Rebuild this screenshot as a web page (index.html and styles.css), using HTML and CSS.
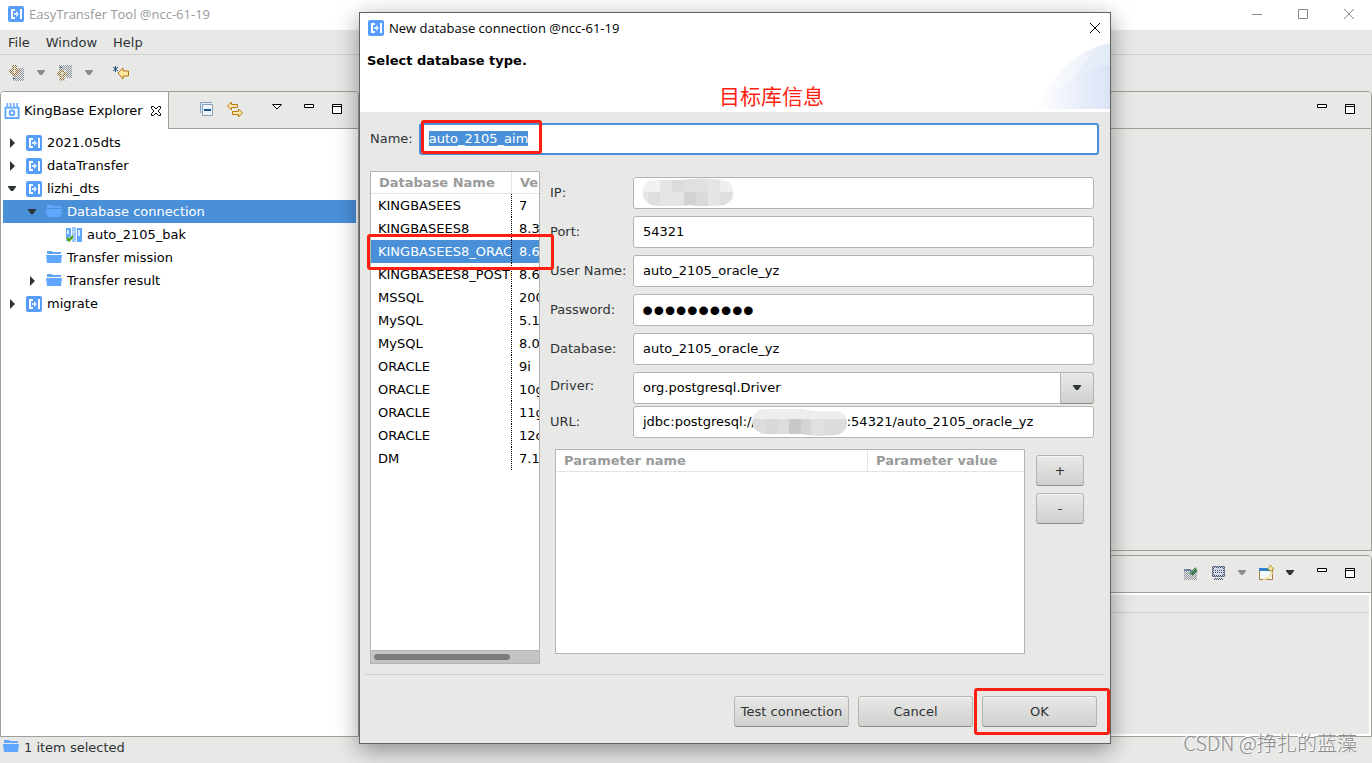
FILE: index.html
```html
<!DOCTYPE html>
<html lang="en">
<head>
<meta charset="utf-8">
<title>EasyTransfer Tool @ncc-61-19</title>
<link rel="stylesheet" href="styles.css">
</head>
<body>
<svg class="defs" aria-hidden="true">
  <defs>
    <pattern id="dots-gray" width="2" height="2" patternUnits="userSpaceOnUse"><path d="M0 0h1v1H0zM1 1h1v1H1z" fill="#8f959f"/></pattern>
    <pattern id="dots-brown" width="2" height="2" patternUnits="userSpaceOnUse"><path d="M0 0h1v1H0zM1 1h1v1H1z" fill="#8a6a38"/></pattern>
    <pattern id="dots-navy" width="2" height="2" patternUnits="userSpaceOnUse"><path d="M0 0h1v1H0zM1 1h1v1H1z" fill="#3c4d6e"/></pattern>
    <linearGradient id="fade-a" x1="0" x2="1"><stop offset="0" stop-color="#fff"/><stop offset="1" stop-color="#e6ecf9"/></linearGradient>
    <linearGradient id="fade-b" x1="0" x2="1"><stop offset="0" stop-color="#fff"/><stop offset="1" stop-color="#dae3f6"/></linearGradient>
  </defs>
  <symbol id="app" viewBox="0 0 16 16"><rect width="16" height="16" rx="2" fill="#579efc"/><path d="M3 3h4v2H5v6h2v2H3z" fill="#fff"/><path d="M12 3h2v10h-2z" fill="#fff"/><path d="M6 7h2V5l3 3-3 3V9H6z" fill="#e3efff"/></symbol>
  <symbol id="folder" viewBox="0 0 16 16"><path d="M1 3V1h5l1 1h8v2H1z" fill="#60a6fb"/><path d="M0 5h16l-1 8H1z" fill="#62a7ff"/></symbol>
  <symbol id="right" viewBox="0 0 8 10"><path d="M2 0l5 5-5 5z" fill="#2e3436"/></symbol>
  <symbol id="down" viewBox="0 0 10 6"><path d="M1 0h8v1L6 5H4L1 1z" fill="currentColor"/></symbol>
  <symbol id="min" viewBox="0 0 16 16"><path d="M3.500 3.500h9v3h-9z" fill="#fff" stroke="#000"/></symbol>
  <symbol id="max" viewBox="0 0 16 16"><path d="M3.500 3.500h9v9h-9zM3 5.500h10" fill="#fff" stroke="#000"/></symbol>
</svg>

<header class="titlebar">
  <svg class="icon"><use href="#app"/></svg>
  <h1 class="title">EasyTransfer Tool @ncc-61-19</h1>
  <div class="window-controls">
    <button type="button" aria-label="Minimize"><svg class="icon" viewBox="0 0 16 16"><path d="M3 8.500h10" stroke="#888"/></svg></button>
    <button type="button" aria-label="Maximize"><svg class="icon" viewBox="0 0 16 16"><path d="M3.500 3.500h9v9h-9z" fill="none" stroke="#888"/></svg></button>
    <button type="button" aria-label="Close"><svg class="icon" viewBox="0 0 16 16"><path d="M3 3l10 10M13 3L3 13" stroke="#888"/></svg></button>
  </div>
</header>
<nav class="menubar">
  <button type="button">File</button><button type="button">Window</button><button type="button">Help</button>
</nav>
<div class="toolbar">
  <button type="button" aria-label="Import"><svg class="icon" viewBox="0 0 16 16"><path d="M7 3h8v13H4v-4h3z" fill="url(#dots-gray)"/><path d="M4 .500h3v5h3L5.500 10.500 1 6V5.500h3z" fill="#efe6cf" stroke="url(#dots-brown)" stroke-width="2"/><path d="M4 13h2v1H4z" fill="#345a8a"/></svg></button>
  <button type="button" aria-label="Import options"><svg class="caret muted"><use href="#down"/></svg></button>
  <button type="button" aria-label="Export"><svg class="icon" viewBox="0 0 16 16"><path d="M2 0h13v13H9V5H2z" fill="url(#dots-gray)"/><path d="M5 5l4.500 4.500h-3v5h-3v-5h-3z" fill="#efe6cf" stroke="url(#dots-brown)" stroke-width="2"/><path d="M3 2h2v1H3z" fill="#345a8a"/></svg></button>
  <button type="button" aria-label="Export options"><svg class="caret muted"><use href="#down"/></svg></button>
  <button type="button" aria-label="Last edit location"><svg class="icon" viewBox="0 0 16 16"><path d="M5 8l5-5v3h5.500v5H10v3z" fill="#ffe9a0" stroke="#b87812"/><path d="M2.500 1v6M0 2l5 4M5 2L0 6" stroke="#1f4f80"/></svg></button>
</div>

<main class="workbench">
  <section class="panel explorer">
    <div class="panel-head">
      <div class="tab">
        <svg class="icon" viewBox="0 0 16 17"><path d="M0 4h16v13H0z" fill="#5fa6fb"/><path d="M3 0v5M6.500 0v5M10 0v5M13.500 0v5" stroke="#78b3fb" stroke-width="2"/><path d="M2 6h12v9H2z" fill="#fff"/><circle cx="8" cy="10.500" r="2.500" fill="#fff" stroke="#5fa6fb" stroke-width="2"/></svg>
        <span>KingBase Explorer</span>
        <button type="button" aria-label="Close tab"><svg class="icon-sm" viewBox="0 0 12 12"><path d="M1.500 1.500h2L6 4l2.500-2.500h2v2L8 6l2.500 2.500v2h-2L6 8l-2.500 2.500h-2v-2L4 6 1.500 3.500z" fill="#fff" stroke="#000"/></svg></button>
      </div>
      <div class="tools">
        <button type="button" aria-label="Collapse all"><svg class="icon" viewBox="0 0 16 16"><path d="M1.500 12V1.500H13" fill="none" stroke="#7fa2c4"/><path d="M3.500 3.500h10v11h-10z" fill="#eef5fc" stroke="#86a0ba"/><path d="M5 9h7" stroke="#16568f" stroke-width="2"/></svg></button>
        <button type="button" class="after-sm" aria-label="Link with editor"><svg class="icon" viewBox="0 0 16 16"><path d="M.500 5l4-4v2.500h6v3h-6V9zM15.500 12l-4-4v2.500h-6v3h6V16z" fill="#ffe9a8" stroke="#b87812"/></svg></button>
        <button type="button" class="after-lg" aria-label="View menu"><svg class="icon" viewBox="0 0 16 16"><path d="M3.500 3.500h9L8 8z" fill="#fff" stroke="#000"/></svg></button>
        <button type="button" class="after-md" aria-label="Minimize view"><svg class="icon"><use href="#min"/></svg></button>
        <button type="button" class="after-sm" aria-label="Maximize view"><svg class="icon"><use href="#max"/></svg></button>
      </div>
    </div>
    <ul class="tree">
      <li class="node"><svg class="twisty"><use href="#right"/></svg><svg class="icon"><use href="#app"/></svg><span>2021.05dts</span></li>
      <li class="node"><svg class="twisty"><use href="#right"/></svg><svg class="icon"><use href="#app"/></svg><span>dataTransfer</span></li>
      <li class="node"><svg class="caret"><use href="#down"/></svg><svg class="icon"><use href="#app"/></svg><span>lizhi_dts</span></li>
      <li class="node level-1 selected"><svg class="caret"><use href="#down"/></svg><svg class="icon"><use href="#folder"/></svg><span>Database connection</span></li>
      <li class="node level-2"><span class="twisty"></span><svg class="icon" viewBox="0 0 16 16"><path d="M0 1h5v13H0z" fill="#62a7ff"/><path d="M6 0h4v15H6z" fill="#9cc8ff"/><path d="M11 1h5v14h-5z" fill="#62a7ff"/><path d="M7 4h2v2H7zM12 3h2v6h-2zM1 3h2v4H1z" fill="#d5e8ff"/><path d="M1 11l2 2 4-4" fill="none" stroke="#e6f3dc" stroke-width="3"/><path d="M1 10.500l2 3 4-4.500" fill="none" stroke="#3f9d10" stroke-width="2"/></svg><span>auto_2105_bak</span></li>
      <li class="node level-1"><span class="twisty"></span><svg class="icon"><use href="#folder"/></svg><span>Transfer mission</span></li>
      <li class="node level-1"><svg class="twisty"><use href="#right"/></svg><svg class="icon"><use href="#folder"/></svg><span>Transfer result</span></li>
      <li class="node"><svg class="twisty"><use href="#right"/></svg><svg class="icon"><use href="#app"/></svg><span>migrate</span></li>
    </ul>
  </section>
  <div class="right-side">
    <section class="panel editor">
      <div class="panel-head"><div class="tools">
        <button type="button" aria-label="Minimize editor"><svg class="icon"><use href="#min"/></svg></button>
        <button type="button" class="after-sm" aria-label="Maximize editor"><svg class="icon"><use href="#max"/></svg></button>
      </div></div>
    </section>
    <section class="panel console">
      <div class="panel-head"><div class="tools">
        <button type="button" aria-label="Pin console"><svg class="icon" viewBox="0 0 16 16"><path d="M2 5h9v2h4v8H2z" fill="url(#dots-gray)"/><path d="M2 4h7v2H2z" fill="#71849b"/><path d="M8 9l6-6M10 10l5-5" stroke="#3e7a52" stroke-width="2"/><path d="M8 9l6-6" stroke="#9cc0a6" stroke-dasharray="1 1"/></svg></button>
        <button type="button" class="after-sm" aria-label="Display console"><svg class="icon" viewBox="0 0 16 16"><path d="M3 2h11v9H3z" fill="#d4dae4"/><path d="M2 1h13v2H2zM2 3h2v9H2zM13 3h2v9h-2zM2 10h13v2H2zM4 13h9v2H4zM5 5h7v1H5zM5 7h7v1H5z" fill="url(#dots-navy)"/><path d="M2.500 1.500h12v10h-12z" fill="none" stroke="#4d5c7a" stroke-opacity=".5"/></svg></button>
        <button type="button" class="after-xs" aria-label="Console list"><svg class="caret muted"><use href="#down"/></svg></button>
        <button type="button" class="after-xs" aria-label="Open console"><svg class="icon" viewBox="0 0 16 16"><path d="M1.500 3.500h13v11h-13z" fill="#f2f9ff" stroke="#a3803c"/><path d="M1 3h11v3H1z" fill="#3183c8"/><path d="M5 14c5 0 8-3 9-7" fill="none" stroke="#f5e7ae" stroke-width="2"/><path d="M12.500 0l1.500 2.500 2 1-2 1-1.500 2.500-1-2.500-2-1 2-1z" fill="#ffeeb0" stroke="#c39a3a"/></svg></button>
        <button type="button" class="after-xs" aria-label="New console"><svg class="caret"><use href="#down"/></svg></button>
        <button type="button" class="after-md" aria-label="Minimize console"><svg class="icon"><use href="#min"/></svg></button>
        <button type="button" class="after-sm" aria-label="Maximize console"><svg class="icon"><use href="#max"/></svg></button>
      </div></div>
      <div class="console-body"><div class="console-label"></div></div>
    </section>
  </div>
</main>
<footer class="statusbar"><svg class="icon"><use href="#folder"/></svg><span>1 item selected</span></footer>

<div class="dialog" role="dialog" aria-labelledby="dialog-title">
  <div class="dialog-title">
    <svg class="icon"><use href="#app"/></svg>
    <h2 class="title" id="dialog-title">New database connection @ncc-61-19</h2>
    <button type="button" aria-label="Close dialog"><svg class="icon" viewBox="0 0 16 16"><path d="M3 3l10 10M13 3L3 13" stroke="#000"/></svg></button>
  </div>
  <div class="banner">
    <p class="banner-text">Select database type.</p>
    <p class="note">目标库信息</p>
    <svg class="banner-art" viewBox="0 0 75 66"><path d="M0 66C16 34 42 6 75 0v66z" fill="url(#fade-a)"/><path d="M27 66C37 34 52 8 75 0v66z" fill="#e2eaf8" opacity=".5"/><path d="M0 66C24 42 48 26 75 22v44z" fill="url(#fade-b)"/></svg>
  </div>
  <form class="dialog-body">
    <div class="name-row">
      <label for="name">Name:</label>
      <div class="name-field"><input class="field active" id="name" value="auto_2105_aim" autofocus><span class="mark mark-name"></span></div>
    </div>
    <div class="columns">
      <div class="db-box">
        <div class="db-scroll">
          <table class="db-table">
            <colgroup><col class="db-name"><col class="db-version"></colgroup>
            <thead><tr><th>Database Name</th><th>Version</th></tr></thead>
            <tbody>
              <tr><td>KINGBASEES</td><td>7</td></tr>
              <tr><td>KINGBASEES8</td><td>8.3</td></tr>
              <tr class="selected"><td>KINGBASEES8_ORACLE</td><td>8.6</td></tr>
              <tr><td>KINGBASEES8_POSTGRES</td><td>8.6</td></tr>
              <tr><td>MSSQL</td><td>2000</td></tr>
              <tr><td>MySQL</td><td>5.1</td></tr>
              <tr><td>MySQL</td><td>8.0</td></tr>
              <tr><td>ORACLE</td><td>9i</td></tr>
              <tr><td>ORACLE</td><td>10g</td></tr>
              <tr><td>ORACLE</td><td>11g</td></tr>
              <tr><td>ORACLE</td><td>12c</td></tr>
              <tr><td>DM</td><td>7.1</td></tr>
            </tbody>
          </table>
        </div>
        <div class="scrollbar"><div class="thumb"></div></div>
        <span class="mark mark-row"></span>
      </div>
      <div class="settings">
        <div class="form-row"><label for="ip">IP:</label><div class="control"><input class="field" id="ip">
          <svg class="mosaic mosaic-ip" viewBox="0 0 100 28"><clipPath id="clip-ip"><path d="M14 2h30q20-3 42 0a13 13 0 0 1 0 25q-18 2-35 0-18 3-37 0a13 13 0 0 1 0-25z"/></clipPath><g clip-path="url(#clip-ip)"><path d="M0 0h100v28H0z" fill="#e5e5e5"/><path d="M0 0h22v14H0z" fill="#f1f1f1"/><path d="M10 14h12v14H10z" fill="#dedede"/><path d="M34 0h12v14H34z" fill="#dcdcdc"/><path d="M46 0h24v14H46z" fill="#e0e0e0"/><path d="M46 14h12v14H46z" fill="#d2d2d2"/><path d="M58 14h12v14H58z" fill="#dadada"/><path d="M82 14h12v14H82z" fill="#dedede"/><path d="M82 0h18v14H82z" fill="#efefef"/></g></svg></div></div>
        <div class="form-row"><label for="port">Port:</label><div class="control"><input class="field" id="port" value="54321"></div></div>
        <div class="form-row"><label for="user">User Name:</label><div class="control"><input class="field" id="user" value="auto_2105_oracle_yz"></div></div>
        <div class="form-row"><label for="password">Password:</label><div class="control"><input class="field secret" id="password" type="password" value="0123456789"></div></div>
        <div class="form-row"><label for="database">Database:</label><div class="control"><input class="field" id="database" value="auto_2105_oracle_yz"></div></div>
        <div class="row-pair">
          <div class="form-row raised"><label for="driver">Driver:</label><div class="control"><select class="field" id="driver"><option>org.postgresql.Driver</option></select><span class="select-arrow"><svg class="caret"><use href="#down"/></svg></span></div></div>
          <div class="form-row"><label for="url">URL:</label><div class="control"><input class="field" id="url" value="jdbc:postgresql://                      :54321/auto_2105_oracle_yz">
            <svg class="mosaic mosaic-url" viewBox="0 0 98 28"><clipPath id="clip-url"><path d="M13 1h38q5 2 10 2h22a12 12 0 0 1 0 24q-16 2-34-1H13a12 12 0 0 1 0-25z"/></clipPath><g clip-path="url(#clip-url)"><path d="M0 0h98v28H0z" fill="#dcdcdc"/><path d="M0 0h98v11H0z" fill="#ededed"/><path d="M14 11h12v17H14z" fill="#d8d8d8"/><path d="M37 11h12v17H37z" fill="#c8c8c8"/><path d="M49 11h10v17H49z" fill="#d4d4d4"/><path d="M59 11h12v17H59z" fill="#e0e0e0"/></g></svg></div></div>
        </div>
        <div class="params">
          <div class="param-box">
            <table class="param-table"><colgroup><col class="param-name"><col></colgroup><thead><tr><th>Parameter name</th><th>Parameter value</th></tr></thead></table>
          </div>
          <div class="param-buttons"><button type="button" class="btn">+</button><button type="button" class="btn">-</button></div>
        </div>
      </div>
    </div>
  </form>
  <div class="actions">
    <button type="button" class="btn">Test connection</button>
    <button type="button" class="btn">Cancel</button>
    <div class="ok-wrap"><button type="button" class="btn">OK</button><span class="mark mark-ok"></span></div>
  </div>
</div>
<div class="watermark">CSDN @挣扎的蓝藻</div>
<script src="app.js"></script>
</body>
</html>
```

FILE: styles.css
```css
* { box-sizing: border-box; }
body {
  margin: 0;
  height: 100vh;
  display: flex;
  flex-direction: column;
  position: relative;
  overflow: hidden;
  background: #e8e8e6;
  color: #2e3436;
  font: 13px/23px "DejaVu Sans", "Noto Sans CJK SC", sans-serif;
}
button {
  font: inherit;
  color: inherit;
  background: none;
  border: 0;
  padding: 0;
  display: flex;
  align-items: center;
  justify-content: center;
}
p, h1, h2, ul { margin: 0; padding: 0; list-style: none; font-weight: normal; }
.defs { position: absolute; width: 0; height: 0; }
.icon { width: 16px; height: 16px; flex: none; display: block; }
.icon-sm { width: 12px; height: 12px; display: block; }
.caret { width: 10px; height: 6px; flex: none; display: block; color: #2e3436; }
.twisty { width: 10px; height: 10px; flex: none; display: block; }
.muted { color: #8b8e8f; }

.titlebar { height: 30px; flex: none; display: flex; align-items: center; gap: 5px; padding: 0 15px 2px 8px; background: #fff; }
.title { flex: 1; font: 13px/20px "Open Sans", "Noto Sans", sans-serif; }
.titlebar .title { color: #999; }
.window-controls { display: flex; gap: 30px; }
.menubar { height: 25px; flex: none; display: flex; gap: 16px; padding: 0 8px; border-bottom: 1px solid #d0d0ce; }
.toolbar { height: 36px; flex: none; display: flex; align-items: center; gap: 11px; padding: 0 9px; }
.toolbar button:last-child { margin-left: 8px; }

.workbench { flex: 1; min-height: 0; display: flex; gap: 3px; }
.right-side { flex: 1; min-width: 0; display: flex; flex-direction: column; gap: 4px; }
.panel { display: flex; flex-direction: column; border: 1px solid #a0a09a; border-radius: 4px 4px 0 0; }
.explorer { width: 359px; flex: none; background: #fff; }
.editor { flex: 461; }
.console { flex: 181; min-height: 0; }
.panel-head { height: 37px; flex: none; display: flex; background: #e8e8e6; border-bottom: 1px solid #a0a09a; border-radius: 3px 3px 0 0; }
.tab { height: 37px; display: flex; align-items: center; gap: 4px; padding: 0 6px 0 3px; background: #fff; border-right: 1px solid #a0a09a; border-radius: 3px 0 0 0; color: #000; }
.tab button { margin-left: 3px; }
.tools { margin-left: auto; display: flex; align-items: center; padding: 0 13px 2px 0; }
.tools button { width: 16px; }
.after-xs { margin-left: 8px; }
.after-sm { margin-left: 12px; }
.after-md { margin-left: 16px; }
.after-lg { margin-left: 26px; }
.tree { padding: 2px; color: #000; }
.node { height: 23px; display: flex; align-items: center; gap: 5px; padding-left: 4px; }
.node .twisty, .node .caret { margin-right: 4px; }
.level-1 { padding-left: 24px; }
.level-2 { padding-left: 44px; }
.tree .selected { background: #4a90d9; color: #fff; }
.console-body { flex: 1; border: 2px solid #fff; }
.console-label { height: 18px; border-bottom: 1px solid #cfcfcd; }
.statusbar { height: 26px; flex: none; display: flex; align-items: center; gap: 5px; padding: 0 3px 6px; }

.dialog {
  position: absolute;
  top: 12px;
  left: 359px;
  right: 261px;
  background: #e8e8e6;
  border: 1px solid #626262;
  box-shadow: 0 6px 22px rgba(0, 0, 0, .4);
}
.dialog-title { height: 30px; display: flex; align-items: center; gap: 5px; padding: 0 7px 0 8px; background: #fff; color: #000; }
.banner { height: 69px; display: flex; justify-content: space-between; background: #fff; }
.banner-text { flex: 1; padding: 6px 7px; color: #000; font-weight: bold; }
.note { align-self: flex-end; padding-bottom: 2px; color: #ff1f12; font: 400 21px/30px "Noto Sans CJK SC", sans-serif; }
.banner-art { width: 75px; height: 66px; margin-left: 211px; }
.dialog-body { margin: 0 5px; padding: 11px 6px 10px 5px; border-bottom: 1px solid #cfcfcd; }
.name-row { display: flex; align-items: center; gap: 6px; }
.name-row label { padding-bottom: 2px; }
.name-field { flex: 1; position: relative; }
.field {
  display: block;
  width: 100%;
  height: 32px;
  margin: 0;
  padding: 0 9px 2px;
  border: 1px solid #b4b4b0;
  border-radius: 3px;
  outline: 0;
  appearance: none;
  background: #fff;
  color: #000;
  font: inherit;
}
.active { border: 2px solid #4a90d9; padding-left: 8px; }
.field::selection { background: #4a90d9; color: #fff; }
.secret { padding-bottom: 0; padding-left: 8px; font: 32px/32px "Liberation Sans", sans-serif; }
.mark { position: absolute; border: 3px solid #ff1f12; border-radius: 3px; pointer-events: none; }
.mark-name { left: 2px; top: -3px; width: 121px; height: 34px; }
.mark-row { left: -4px; right: -15px; top: 62px; height: 36px; }
.mark-ok { left: -8px; right: -13px; top: -8px; bottom: -8px; }

.columns { display: flex; gap: 10px; margin-top: 16px; }
.db-box { width: 170px; flex: none; display: flex; flex-direction: column; position: relative; border: 1px solid #b4b4b0; background: #fff; }
.db-scroll { flex: 1; overflow: hidden; }
table { border-collapse: separate; border-spacing: 0; table-layout: fixed; text-align: left; }
th { height: 22px; padding: 0 8px; border-bottom: 1px solid #e4e4e2; color: #999b9a; line-height: 21px; white-space: nowrap; overflow: hidden; }
th:first-child { border-right: 1px solid #e4e4e2; }
.db-table { width: 240px; color: #000; }
.db-name { width: 141px; }
.db-table td { height: 23px; padding: 0 1px 0 7px; white-space: nowrap; overflow: hidden; }
.db-table td:first-child { border-right: 1px dotted #000; }
.db-table .selected { background: #4a90d9; color: #fff; }
.scrollbar { height: 13px; padding: 3px; background: #c3c5c4; border-top: 1px solid #b4b4b0; }
.thumb { width: 84%; height: 6px; border-radius: 3px; background: #7b7d7d; }

.settings { flex: 1; min-width: 0; display: flex; flex-direction: column; gap: 7px; padding: 6px 0 10px; }
.form-row { display: flex; align-items: center; }
.form-row label { width: 83px; padding-bottom: 2px; flex: none; white-space: nowrap; }
.raised label { padding-bottom: 6px; }
.control { flex: 1; position: relative; margin-right: 5px; }
.row-pair { display: flex; flex-direction: column; gap: 2px; }
.mosaic { position: absolute; }
.mosaic-ip { left: 5px; top: 1px; width: 100px; height: 28px; }
.mosaic-url { left: 119px; top: 2px; width: 98px; height: 28px; }
.select-arrow {
  position: absolute;
  top: 0;
  right: 0;
  bottom: 0;
  width: 34px;
  display: flex;
  align-items: center;
  justify-content: center;
  pointer-events: none;
  border: 1px solid #b4b4b0;
  border-bottom-color: #8c8c89;
  border-radius: 0 3px 3px 0;
  background: linear-gradient(#e8e8e6, #d0d0ce);
}
.params { display: flex; gap: 11px; padding: 4px 15px 0 5px; }
.param-box { flex: 1; height: 205px; border: 1px solid #b4b4b0; background: #fff; }
.param-table { width: 100%; }
.param-name { width: 312px; }
.param-buttons { width: 48px; display: flex; flex-direction: column; gap: 7px; padding-top: 6px; }
.btn {
  height: 31px;
  padding-bottom: 1px;
  border: 1px solid #b4b4b0;
  border-bottom-color: #8c8c89;
  border-radius: 3px;
  background: linear-gradient(#e8e8e6, #d0d0ce);
  box-shadow: inset 0 1px #f6f6f5;
}
.actions { display: flex; justify-content: flex-end; gap: 9px; padding: 21px 13px 16px; }
.actions .btn { width: 115px; white-space: nowrap; }
.ok-wrap { position: relative; }

.watermark { position: absolute; right: 15px; bottom: 4px; color: #8c8c8c; text-shadow: -1px -1px #fafafa; font: 300 20px/32px "Noto Sans CJK SC", sans-serif; }
```

FILE: app.js
```js
const nameField = document.getElementById("name");
nameField.focus();
nameField.select();
```
